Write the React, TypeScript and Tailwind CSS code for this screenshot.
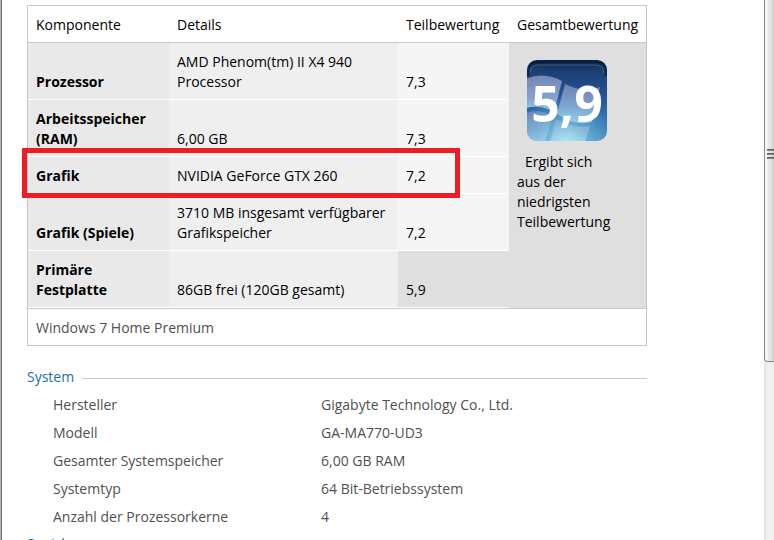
import React from "react";

type Component = {
  name: string;
  details: string;
  score: string;
  marked?: boolean;
  lowest?: boolean;
};

const components: Component[] = [
  { name: "Prozessor", details: "AMD Phenom(tm) II X4 940 Processor", score: "7,3" },
  { name: "Arbeitsspeicher (RAM)", details: "6,00 GB", score: "7,3" },
  { name: "Grafik", details: "NVIDIA GeForce GTX 260", score: "7,2", marked: true },
  { name: "Grafik (Spiele)", details: "3710 MB insgesamt verfügbarer Grafikspeicher", score: "7,2" },
  { name: "Primäre Festplatte", details: "86GB frei (120GB gesamt)", score: "5,9", lowest: true },
];

const systemInfo = [
  { label: "Hersteller", value: "Gigabyte Technology Co., Ltd." },
  { label: "Modell", value: "GA-MA770-UD3" },
  { label: "Gesamter Systemspeicher", value: "6,00 GB RAM" },
  { label: "Systemtyp", value: "64 Bit-Betriebssystem" },
  { label: "Anzahl der Prozessorkerne", value: "4" },
];

const ScoreBadge: React.FC<{ score: string }> = ({ score }) => (
  <div className="relative ml-[9px] h-[82px] w-[82px]">
    <svg viewBox="0 0 82 82" className="h-full w-full" aria-hidden="true">
      <defs>
        <linearGradient id="badge-base" x1="0" y1="0" x2="0" y2="1">
          <stop offset="0" stopColor="#0a2348" />
          <stop offset="0.12" stopColor="#1c3d70" />
          <stop offset="0.45" stopColor="#24559a" />
          <stop offset="0.75" stopColor="#3679b5" />
          <stop offset="1" stopColor="#4a93c4" />
        </linearGradient>
        <radialGradient id="badge-glow" cx="0.48" cy="1" r="0.6">
          <stop offset="0" stopColor="#b4eef4" stopOpacity="0.85" />
          <stop offset="1" stopColor="#5cb5dc" stopOpacity="0" />
        </radialGradient>
        <linearGradient id="badge-pane" x1="0" y1="0" x2="0" y2="1">
          <stop offset="0" stopColor="#7f8dbb" />
          <stop offset="0.6" stopColor="#8eaad2" />
          <stop offset="1" stopColor="#a8d4e6" />
        </linearGradient>
        <clipPath id="badge-clip">
          <rect x="1" y="0" width="80" height="81" rx="10" />
        </clipPath>
      </defs>
      <g clipPath="url(#badge-clip)">
        <rect width="82" height="82" fill="url(#badge-base)" />
        <path d="M0 19C12 13 26 15 36 21L28 52C18 46 8 46 0 48Z" fill="url(#badge-pane)" opacity="0.9" />
        <path d="M39 24C50 30 62 31 74 27L66 62C54 65 42 62 31 54Z" fill="url(#badge-pane)" opacity="0.85" />
        <path d="M0 53C9 50 18 51 27 56L19 82H0Z" fill="url(#badge-pane)" opacity="0.8" />
        <path d="M30 59C41 66 53 68 64 66L59 82H24Z" fill="url(#badge-pane)" opacity="0.85" />
        <rect width="82" height="82" fill="url(#badge-glow)" />
        <path d="M2 16V11Q2 2 11 2H71Q80 2 80 11V16" fill="none" stroke="#061c3c" strokeWidth="3" opacity="0.7" />
      </g>
      <path d="M4 13Q5 5 12 5H70Q77 5 78 13" fill="none" stroke="#7b98c0" strokeWidth="1" opacity="0.4" />
    </svg>
    <span className="absolute inset-0 flex items-center justify-center pt-1 text-[50px] leading-none font-bold text-white">
      {score}
    </span>
  </div>
);

const SectionTitle: React.FC<{ title: string }> = ({ title }) => (
  <h2 className="flex items-center gap-2 text-[#1570b0]">
    {title}
    <span className="mt-[2px] h-px flex-1 bg-[#c8c8c8]" />
  </h2>
);

const ScoreTable: React.FC = () => (
  <table className="w-full table-fixed border-separate border-spacing-0 border border-[#c8c8c8] text-left text-black">
    <colgroup>
      <col className="w-[141px]" />
      <col />
      <col className="w-[111px]" />
      <col className="w-[137px]" />
    </colgroup>
    <thead>
      <tr>
        {["Komponente", "Details", "Teilbewertung", "Gesamtbewertung"].map((title) => (
          <th key={title} scope="col" className="border-b border-[#c8c8c8] pt-[9px] pb-[7px] pl-2 font-normal whitespace-nowrap">
            {title}
          </th>
        ))}
      </tr>
    </thead>
    <tbody>
      {components.map((item, index) => (
        <tr key={item.name} className={`align-bottom ${item.marked ? "relative z-10" : ""}`}>
          <th scope="row" className="border-b border-white bg-[#e9e9e9] px-2 pt-[9px] pb-[7px] font-bold">
            {item.name}
            {item.marked && (
              <span className="pointer-events-none absolute -top-[9px] -left-[6px] h-[50px] w-[438px] border-5 border-[#ee1c25]" />
            )}
          </th>
          <td className="border-b border-white bg-[#efefef] px-2 pt-[9px] pb-[7px]">{item.details}</td>
          <td
            className={`border-b border-white px-2 pt-[9px] pb-[7px] ${item.lowest ? "bg-[#dfdfdf]" : "bg-[#f5f5f5]"}`}
          >
            {item.score}
          </td>
          {index === 0 && (
            <td rowSpan={components.length} className="bg-[#dfdfdf] px-2 pt-[17px] align-top">
              <ScoreBadge score="5,9" />
              <p className="mt-[10px] pr-6 indent-2">Ergibt sich aus der niedrigsten Teilbewertung</p>
            </td>
          )}
        </tr>
      ))}
    </tbody>
    <tfoot>
      <tr>
        <td colSpan={4} className="border-t border-[#c8c8c8] px-2 pt-[9px] pb-[7px] text-[#505050]">
          Windows 7 Home Premium
        </td>
      </tr>
    </tfoot>
  </table>
);

const Scrollbar: React.FC = () => (
  <div className="flex w-[10px] shrink-0 flex-col bg-gradient-to-r from-[#e3e3e3] to-[#f0f0f0] to-40%">
    <div className="flex h-[362px] flex-col gap-[2px] rounded-bl-sm border-b border-l border-[#8b8b8b] bg-[linear-gradient(to_right,#f5f5f5_0_35%,#e6e6e6_35%_60%,#c9c9c9)] pt-[149px] pl-[2px]">
      <span className="h-[2px] bg-gradient-to-b from-[#4a4a4a] to-[#9a9a9a]" />
      <span className="h-[2px] bg-gradient-to-b from-[#4a4a4a] to-[#9a9a9a]" />
      <span className="h-[2px] bg-gradient-to-b from-[#4a4a4a] to-[#9a9a9a]" />
    </div>
  </div>
);

export default function App() {
  return (
    <div className="flex h-screen overflow-hidden bg-white font-['Open_Sans','Noto_Sans',sans-serif] text-[14px] leading-5 text-[#505050]">
      <div className="w-[2px] shrink-0 border-r border-[#6e6e6e] bg-[#b4b4b4]" />
      <main className="min-w-0 flex-1 pt-[5px] pl-[25px]">
        <div className="max-w-[620px]">
          <ScoreTable />
          <section className="mt-[21px]">
            <SectionTitle title="System" />
            <dl className="mt-2 flex flex-col gap-2 pl-[26px]">
              {systemInfo.map((item) => (
                <div key={item.label} className="flex">
                  <dt className="w-[268px] shrink-0">{item.label}</dt>
                  <dd>{item.value}</dd>
                </div>
              ))}
            </dl>
          </section>
          <section className="mt-[7px]">
            <SectionTitle title="Speicher" />
          </section>
        </div>
      </main>
      <Scrollbar />
    </div>
  );
}
